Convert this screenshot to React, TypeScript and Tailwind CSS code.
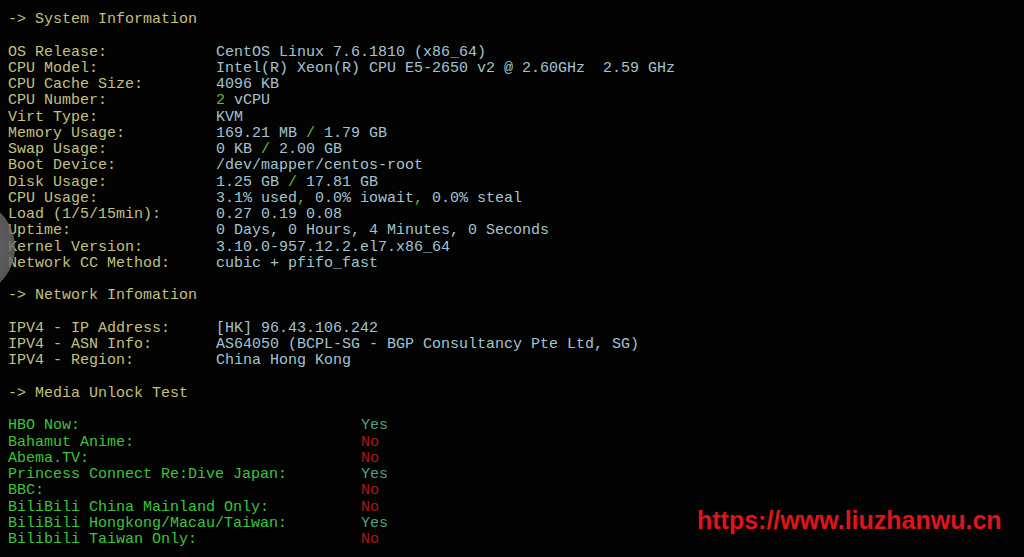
const mono = { fontFamily: '"Liberation Mono", "Courier New", monospace' };

type Part = { t: string; c?: string };

const sys: { label: string; value: Part[] }[] = [
  { label: 'OS Release:', value: [{ t: 'CentOS Linux 7.6.1810 (x86_64)' }] },
  { label: 'CPU Model:', value: [{ t: 'Intel(R) Xeon(R) CPU E5-2650 v2 @ 2.60GHz  2.59 GHz' }] },
  { label: 'CPU Cache Size:', value: [{ t: '4096 KB' }] },
  { label: 'CPU Number:', value: [{ t: '2', c: 'g' }, { t: ' vCPU' }] },
  { label: 'Virt Type:', value: [{ t: 'KVM' }] },
  { label: 'Memory Usage:', value: [{ t: '169.21 MB ' }, { t: '/', c: 'g' }, { t: ' 1.79 GB' }] },
  { label: 'Swap Usage:', value: [{ t: '0 KB ' }, { t: '/', c: 'g' }, { t: ' 2.00 GB' }] },
  { label: 'Boot Device:', value: [{ t: '/dev/mapper/centos-root' }] },
  { label: 'Disk Usage:', value: [{ t: '1.25 GB ' }, { t: '/', c: 'g' }, { t: ' 17.81 GB' }] },
  {
    label: 'CPU Usage:',
    value: [{ t: '3.1% used' }, { t: ',', c: 'g' }, { t: ' 0.0% iowait' }, { t: ',', c: 'g' }, { t: ' 0.0% steal' }],
  },
  { label: 'Load (1/5/15min):', value: [{ t: '0.27 0.19 0.08' }] },
  { label: 'Uptime:', value: [{ t: '0 Days, 0 Hours, 4 Minutes, 0 Seconds' }] },
  { label: 'Kernel Version:', value: [{ t: '3.10.0-957.12.2.el7.x86_64' }] },
  { label: 'Network CC Method:', value: [{ t: 'cubic + pfifo_fast' }] },
];

const net = [
  { label: 'IPV4 - IP Address:', value: '[HK] 96.43.106.242' },
  { label: 'IPV4 - ASN Info:', value: 'AS64050 (BCPL-SG - BGP Consultancy Pte Ltd, SG)' },
  { label: 'IPV4 - Region:', value: 'China Hong Kong' },
];

const media = [
  { name: 'HBO Now:', ok: true },
  { name: 'Bahamut Anime:', ok: false },
  { name: 'Abema.TV:', ok: false },
  { name: 'Princess Connect Re:Dive Japan:', ok: true },
  { name: 'BBC:', ok: false },
  { name: 'BiliBili China Mainland Only:', ok: false },
  { name: 'BiliBili Hongkong/Macau/Taiwan:', ok: true },
  { name: 'Bilibili Taiwan Only:', ok: false },
];

const Blank = () => <div className="h-[16.25px]" />;

const Heading = ({ text }: { text: string }) => (
  <div className="text-[#c4c07e] whitespace-pre">{'-> ' + text}</div>
);

export default function App() {
  return (
    <div className="relative h-[557px] w-full overflow-hidden bg-[#030303]">
      <div
        className="pl-2 pt-[12px] text-[15px] leading-[16.25px] text-[#c4c07e] whitespace-pre"
        style={mono}
      >
        <Heading text="System Information" />
        <Blank />
        {sys.map((row) => (
          <div key={row.label} className="flex">
            <span className="w-[208px] shrink-0">{row.label}</span>
            <span className="text-[#a2c4d2]">
              {row.value.map((p, i) => (
                <span key={i} className={p.c === 'g' ? 'text-[#5cbc3a]' : ''}>
                  {p.t}
                </span>
              ))}
            </span>
          </div>
        ))}
        <Blank />
        <Heading text="Network Infomation" />
        <Blank />
        {net.map((row) => (
          <div key={row.label} className="flex">
            <span className="w-[208px] shrink-0">{row.label}</span>
            <span className="text-[#a2c4d2]">{row.value}</span>
          </div>
        ))}
        <Blank />
        <Heading text="Media Unlock Test" />
        <Blank />
        {media.map((row) => (
          <div key={row.name} className="flex">
            <span className="w-[353px] shrink-0 text-[#3cc43c]">{row.name}</span>
            {row.ok ? (
              <span className="text-[#4fa07c]">Yes</span>
            ) : (
              <span className="text-[#a81818]">No</span>
            )}
          </div>
        ))}
      </div>

      {/* grey circle at the left edge (cursor overlay) */}
      <div className="absolute left-[-82px] top-[199px] h-[97px] w-[97px] rounded-full bg-[radial-gradient(circle,#8a8a8a_0%,#6a6a6a_70%,#5a5a5a_100%)] opacity-80" />

      {/* watermark */}
      <div
        className="absolute left-[697px] top-[508px] whitespace-nowrap text-[25px] font-bold leading-none text-[#e0141a]"
        style={{ fontFamily: '"Liberation Sans", Arial, sans-serif' }}
      >
        https://www.liuzhanwu.cn
      </div>
    </div>
  );
}
